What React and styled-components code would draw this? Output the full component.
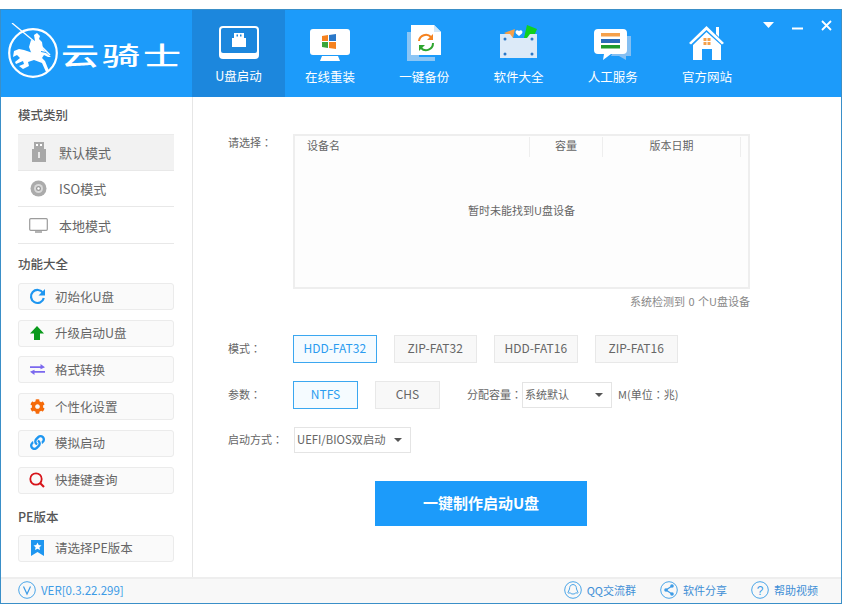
import React from "react"
import styled, { createGlobalStyle } from "styled-components"
import { FaCog, FaLink } from "react-icons/fa"

const CJK = `"Noto Sans CJK SC", "Noto Sans", sans-serif`

const navItems = [
  { label: "U盘启动", Icon: UsbIcon, top: 15, active: true },
  { label: "在线重装", Icon: MonitorIcon, top: 18 },
  { label: "一键备份", Icon: BackupIcon, top: 14 },
  { label: "软件大全", Icon: BoxIcon, top: 12 },
  { label: "人工服务", Icon: ChatIcon, top: 18 },
  { label: "官方网站", Icon: HomeIcon, top: 15 },
]

const modes = [
  { label: "默认模式", Icon: GrayUsb, active: true },
  { label: "ISO模式", Icon: GrayDisc },
  { label: "本地模式", Icon: GrayScreen },
]

const tools = [
  { label: "初始化U盘", Icon: RefreshIcon },
  { label: "升级启动U盘", Icon: UpIcon },
  { label: "格式转换", Icon: SwapIcon },
  { label: "个性化设置", Icon: () => <FaCog size={15} color="#f56a0a" /> },
  { label: "模拟启动", Icon: () => <FaLink size={15} color="#1e96f0" /> },
  { label: "快捷键查询", Icon: SearchIcon },
]

function UsbIcon() {
  return (
    <svg width="44" height="36" viewBox="0 0 44 36">
      <rect x="2" y="1" width="40" height="33" rx="4" fill="#fff" />
      <rect x="4" y="3" width="36" height="25" rx="2" fill="#1c87dd" />
      <path d="M17 8h10v5h2v9H15v-9h2z" fill="#fff" />
      <path d="M19.5 9.5h1.5v2h-1.5zM23 9.5h1.5v2H23z" fill="#1c87dd" />
    </svg>
  )
}

function MonitorIcon() {
  return (
    <svg width="42" height="36" viewBox="0 0 42 36">
      <rect x="1" y="1" width="40" height="26" rx="3" fill="#fff" />
      <path d="M11 33l2-5h16l2 5z" fill="#fff" />
      <path d="M13 8l6-1v6h-6z" fill="#f5821f" />
      <path d="M20 7l7-1v7h-7z" fill="#2a78c8" />
      <path d="M13 14h6v6l-6-1z" fill="#3aa63a" />
      <path d="M20 14h7v7l-7-1z" fill="#f5821f" />
    </svg>
  )
}

function BackupIcon() {
  return (
    <svg width="36" height="38" viewBox="0 0 36 38">
      <rect x="1" y="8" width="12" height="26" fill="#8cc6f5" />
      <rect x="1" y="33" width="28" height="4" fill="#8cc6f5" />
      <path d="M5 1h23l7 7v23H5z" fill="#fff" />
      <path d="M28 1l7 7h-7z" fill="#cfe6f8" />
      <path d="M13 17a7 7 0 0 1 12-4" fill="none" stroke="#f5821f" strokeWidth="2" />
      <path d="M27 10v6h-6z" fill="#f5821f" />
      <path d="M27 19a7 7 0 0 1-12 5" fill="none" stroke="#2ea52e" strokeWidth="2" />
      <path d="M13 27v-6h6z" fill="#2ea52e" />
    </svg>
  )
}

function BoxIcon() {
  return (
    <svg width="40" height="38" viewBox="0 0 40 38">
      <path d="M5 11l11-4-2 9z" fill="#f5a04a" />
      <path d="M28 3l10 4-3 7-3-1-2 5-5-2z" fill="#0fd01f" />
      <path d="M1 12h10l3 4h14l3-4h7v24H1z" fill="#dceaf8" />
      <path d="M20 9c-2-2-4.500 0-3 2.500l3 2.500 3-2.500c1.500-2.500-1-4.500-3-2.500z" fill="#fff" />
      <g fill="#2a78c8">
        <circle cx="6" cy="17" r="1.500" />
        <circle cx="33" cy="17" r="1.500" />
        <circle cx="6" cy="32" r="1.500" />
        <circle cx="33" cy="32" r="1.500" />
      </g>
    </svg>
  )
}

function ChatIcon() {
  return (
    <svg width="40" height="34" viewBox="0 0 40 34">
      <path d="M28 8h10v20h-5v4l-7-4h-8z" fill="#84bff2" />
      <path d="M5 1h25a4 4 0 0 1 4 4v17a4 4 0 0 1-4 4H18l-8 6 1-6H5a4 4 0 0 1-4-4V5a4 4 0 0 1 4-4z" fill="#fff" />
      <rect x="8" y="5" width="19" height="3.500" fill="#f5a04a" />
      <rect x="8" y="11" width="19" height="4" fill="#2a6cb8" />
      <rect x="8" y="17" width="19" height="3.500" fill="#1f9a2c" />
    </svg>
  )
}

function HomeIcon() {
  return (
    <svg width="38" height="36" viewBox="0 0 38 36">
      <path d="M28 2h3v10l-3-3z" fill="#fff" />
      <path d="M1 18L18.500 1 36 18l-2 1.500L18.500 5 3 19.500z" fill="#fff" />
      <path d="M5 20L18.500 7 33 20v15H24V24h-10v11H5z" fill="#fff" />
      <g fill="#f5a04a">
        <rect x="15.500" y="13" width="3" height="3" />
        <rect x="19.500" y="13" width="3" height="3" />
        <rect x="15.500" y="17" width="3" height="3" />
        <rect x="19.500" y="17" width="3" height="3" />
      </g>
    </svg>
  )
}

function LogoMark() {
  return (
    <svg width="54" height="56" viewBox="0 0 54 56">
      <circle cx="27" cy="30" r="23.800" fill="none" stroke="#fff" strokeWidth="2.200" />
      <path d="M6 0l29 24" stroke="#fff" strokeWidth="1.300" />
      <path d="M34 22l10 10" stroke="#fff" strokeWidth="1.500" />
      <path d="M28 12l3-2 3 3-1 3 3 3 1 7 3 3-5-1 0 4-9 0-3-8 2-7 4 1z" fill="#fff" />
      <path
        d="M8 28l5-2 5 1 9 3 8-1 5 1 5 4-3 0-4-2-2 3 3 3 4 10-3 1-4-9-8-3-6 2 1 4-6 3-4-3 5-2-1-3-7 3-1-2 5-4-3-3-4 2z"
        fill="#fff"
      />
    </svg>
  )
}

function GrayUsb() {
  return (
    <svg width="14" height="20" viewBox="0 0 14 20">
      <path d="M2 0h10v7h2v13H0V7h2z" fill="#a8a8a8" />
      <path d="M4 2h2v2H4zM8 2h2v2H8z" fill="#fff" />
      <path d="M7 10v6" stroke="#fff" strokeWidth="1.500" />
    </svg>
  )
}

function GrayDisc() {
  return (
    <svg width="17" height="17" viewBox="0 0 17 17">
      <circle cx="8.500" cy="8.500" r="8" fill="#ababab" />
      <circle cx="8.500" cy="8.500" r="4.500" fill="#d8d8d8" />
      <circle cx="8.500" cy="8.500" r="2.500" fill="#9a9a9a" />
      <circle cx="8.500" cy="8.500" r="1.200" fill="#fff" />
    </svg>
  )
}

function GrayScreen() {
  return (
    <svg width="19" height="15" viewBox="0 0 19 15">
      <rect x="0.700" y="0.700" width="17.600" height="11.600" rx="1" fill="#fff" stroke="#9c9c9c" strokeWidth="1.200" />
      <path d="M6 14h7" stroke="#9c9c9c" strokeWidth="1.500" />
    </svg>
  )
}

function RefreshIcon() {
  return (
    <svg width="17" height="17" viewBox="0 0 17 17">
      <path d="M14 5a6.500 6.500 0 1 0 .8 5" fill="none" stroke="#1e96f0" strokeWidth="2.200" />
      <path d="M16 1v6.500h-6.500z" fill="#1e96f0" />
    </svg>
  )
}

function UpIcon() {
  return (
    <svg width="14" height="14" viewBox="0 0 14 14">
      <path d="M7 0l7 7.500H10V14H4V7.500H0z" fill="#099a1b" />
    </svg>
  )
}

function SwapIcon() {
  return (
    <svg width="15" height="11" viewBox="0 0 15 11">
      <path d="M0 2.200h10.500V0L15 3.300l-4.500 1.900V4H0zM15 8.800H4.500V11L0 7.700l4.500-1.900V7H15z" fill="#7b68ee" />
    </svg>
  )
}

function SearchIcon() {
  return (
    <svg width="16" height="16" viewBox="0 0 16 16">
      <circle cx="7" cy="7" r="5.700" fill="none" stroke="#d7141a" strokeWidth="1.800" />
      <path d="M11 11l4 4" stroke="#d7141a" strokeWidth="2.200" />
    </svg>
  )
}

function BookmarkIcon() {
  return (
    <svg width="13" height="16" viewBox="0 0 13 16">
      <path d="M0 0h13v16l-6.500-4L0 16z" fill="#1e96f0" />
      <path d="M6.500 2.500l1.200 2.600 2.800.3-2.100 1.900.6 2.800-2.500-1.400L4 10.100l.6-2.800-2.100-1.900 2.800-.3z" fill="#fff" />
    </svg>
  )
}

function CircleBadge({ children }) {
  return (
    <svg width="18" height="18" viewBox="0 0 18 18">
      <circle cx="9" cy="9" r="8.300" fill="none" stroke="#4aa5e8" strokeWidth="1" />
      {children}
    </svg>
  )
}

const Glyph = styled.text`
  font: 12px "Liberation Sans", sans-serif;
  fill: #3d9be6;
  text-anchor: middle;
`

const App = () => (
  <>
    <GlobalStyle />
    <Win>
      <Header>
        <Logo>
          <LogoMark />
          <LogoText>云骑士</LogoText>
        </Logo>
        <Nav>
          {navItems.map(({ label, Icon, top, active }) => (
            <NavItem key={label} $active={active}>
              <NavIcon $top={top}>
                <Icon />
              </NavIcon>
              <NavLabel $active={active}>{label}</NavLabel>
            </NavItem>
          ))}
        </Nav>
        <WinControls>
          <svg width="11" height="6" viewBox="0 0 11 6">
            <path d="M0 0h11L5.500 6z" fill="#fff" />
          </svg>
          <svg width="11" height="11" viewBox="0 0 11 11">
            <path d="M0 8.500h11" stroke="#fff" strokeWidth="2" />
          </svg>
          <svg width="11" height="11" viewBox="0 0 11 11">
            <path d="M1 1l9 9M10 1l-9 9" stroke="#fff" strokeWidth="1.800" />
          </svg>
        </WinControls>
      </Header>

      <Body>
        <Sidebar>
          <SideTitle>模式类别</SideTitle>
          <ModeList>
            {modes.map(({ label, Icon, active }) => (
              <ModeRow key={label} $active={active}>
                <ModeIcon>
                  <Icon />
                </ModeIcon>
                {label}
              </ModeRow>
            ))}
          </ModeList>
          <SideTitle $above={10}>功能大全</SideTitle>
          <ToolList>
            {tools.map(({ label, Icon }) => (
              <ToolButton key={label}>
                <ToolIcon>
                  <Icon />
                </ToolIcon>
                {label}
              </ToolButton>
            ))}
          </ToolList>
          <SideTitle $above={13} $below={8}>
            PE版本
          </SideTitle>
          <ToolButton>
            <ToolIcon>
              <BookmarkIcon />
            </ToolIcon>
            请选择PE版本
          </ToolButton>
        </Sidebar>

        <Main>
          <TableRow>
            <FieldLabel>
              请选择<Colon>：</Colon>
            </FieldLabel>
            <DeviceTable>
              <TableHead>
                <HeadCell $left>设备名</HeadCell>
                <HeadCell>容量</HeadCell>
                <HeadCell>版本日期</HeadCell>
              </TableHead>
              <Empty>暂时未能找到U盘设备</Empty>
            </DeviceTable>
          </TableRow>
          <Hint>系统检测到 0 个U盘设备</Hint>

          <OptionRow>
            <FieldLabel>
              模式<Colon>：</Colon>
            </FieldLabel>
            <Choice $active>HDD-FAT32</Choice>
            <Choice>ZIP-FAT32</Choice>
            <Choice>HDD-FAT16</Choice>
            <Choice>ZIP-FAT16</Choice>
          </OptionRow>
          <OptionRow>
            <FieldLabel>
              参数<Colon>：</Colon>
            </FieldLabel>
            <Choice $active $small>
              NTFS
            </Choice>
            <Choice $small>CHS</Choice>
            <SizeLabel>
              分配容量<Colon>：</Colon>
            </SizeLabel>
            <Select $width={90}>
              系统默认
              <Caret />
            </Select>
            <Unit>
              M(单位<Colon>：</Colon>兆)
            </Unit>
          </OptionRow>
          <BootRow>
            <FieldLabel>
              启动方式<Colon>：</Colon>
            </FieldLabel>
            <Select $width={117} $boot>
              UEFI/BIOS双启动
              <Caret />
            </Select>
          </BootRow>
          <MakeButton>一键制作启动U盘</MakeButton>
        </Main>
      </Body>

      <Footer>
        <Version>
          <CircleBadge>
            <path d="M5.500 5.500L9 13l3.500-7.500" fill="none" stroke="#3d9be6" strokeWidth="1.200" />
          </CircleBadge>
          VER[0.3.22.299]
        </Version>
        <FooterLinks>
          <FooterLink>
            <CircleBadge>
              <path d="M9 3.500c-3 0-3.500 3-3.500 4.500L4 11.500c.5 1.500 1.500.5 2 0 .5 2 5.500 2 6 0 .5.500 1.500 1.500 2 0L12.500 8c0-1.500-.5-4.500-3.500-4.500z" fill="none" stroke="#4aa5e8" strokeWidth="1" />
            </CircleBadge>
            QQ交流群
          </FooterLink>
          <FooterLink>
            <CircleBadge>
              <path d="M12 5L6 9l6 4" fill="none" stroke="#3d9be6" strokeWidth="1.200" />
              <circle cx="12" cy="5" r="1.800" fill="#3d9be6" />
              <circle cx="6" cy="9" r="1.800" fill="#3d9be6" />
              <circle cx="12" cy="13" r="1.800" fill="#3d9be6" />
            </CircleBadge>
            软件分享
          </FooterLink>
          <FooterLink>
            <CircleBadge>
              <Glyph x="9" y="13.500">?</Glyph>
            </CircleBadge>
            帮助视频
          </FooterLink>
        </FooterLinks>
      </Footer>
    </Win>
  </>
)

export default App

const GlobalStyle = createGlobalStyle`
  * {
    box-sizing: border-box;
  }
  body {
    margin: 0;
    background: #fff;
    font-family: ${CJK};
  }
`
const Win = styled.div`
  width: 842px;
  height: 595px;
  margin-top: 9px;
  display: flex;
  flex-direction: column;
  border: 1px solid #3a8fc8;
  background: #fff;
`
const Header = styled.header`
  position: relative;
  flex: 0 0 87px;
  display: flex;
  background: #1c9bfa;
`
const Logo = styled.div`
  width: 191px;
  display: flex;
  align-items: flex-start;
  padding: 13px 0 0 5px;
`
const LogoText = styled.div`
  margin: 12px 0 0 1px;
  color: #fff;
  font-size: 38px;
  font-weight: 500;
  line-height: 38px;
  letter-spacing: 3px;
  white-space: nowrap;
  transform: scaleY(0.66);
`
const Nav = styled.nav`
  display: flex;
`
const NavItem = styled.div`
  width: ${(p) => (p.$active ? "93px" : "94.25px")};
  padding-right: ${(p) => (p.$active ? "0" : "4px")};
  display: flex;
  flex-direction: column;
  align-items: center;
  background: ${(p) => (p.$active ? "#1c87dd" : "transparent")};
`
const NavIcon = styled.div`
  height: 56px;
  padding-top: ${(p) => p.$top}px;
`
const NavLabel = styled.div`
  color: #fff;
  font-size: 12.5px;
  line-height: 18px;
  margin-top: ${(p) => (p.$active ? "1px" : "2px")};
`
const WinControls = styled.div`
  position: absolute;
  top: 10px;
  right: 9px;
  display: flex;
  align-items: flex-start;
  gap: 18px;
  svg:first-child {
    margin-top: 2px;
  }
`
const Body = styled.div`
  flex: 1;
  display: flex;
  min-height: 0;
`
const Sidebar = styled.aside`
  width: 192px;
  padding: 8px 18px 0 17px;
  border-right: 1px solid #e6e6e6;
`
const SideTitle = styled.div`
  height: 20px;
  margin: ${(p) => p.$above || 0}px 0 ${(p) => p.$below || 9}px;
  color: #555;
  font-size: 12.5px;
  font-weight: 500;
  line-height: 20px;
`
const ModeList = styled.div`
  display: flex;
  flex-direction: column;
`
const ModeRow = styled.div`
  height: 36.7px;
  display: flex;
  align-items: center;
  color: #666;
  font-size: 13px;
  background: ${(p) => (p.$active ? "#f2f2f2" : "transparent")};
  border-bottom: 1px solid #e8e8e8;
  border-top: ${(p) => (p.$active ? "1px solid #ececec" : "none")};
`
const ModeIcon = styled.span`
  width: 41px;
  display: flex;
  justify-content: center;
`
const ToolList = styled.div`
  display: flex;
  flex-direction: column;
  gap: 9.7px;
`
const ToolButton = styled.div`
  height: 27px;
  padding-bottom: 1px;
  display: flex;
  align-items: center;
  color: #666;
  font-size: 12.5px;
  background: #fafafa;
  border: 1px solid #ebebeb;
  border-radius: 3px;
`
const ToolIcon = styled.span`
  width: 36px;
  display: flex;
  justify-content: center;
`
const Main = styled.main`
  flex: 1;
  padding: 37px 0 0 35px;
`
const Colon = styled.span`
  font-family: "Noto Sans CJK TC", sans-serif;
`
const FieldLabel = styled.div`
  width: 65px;
  flex: none;
  padding-bottom: 2px;
  color: #666;
  font-size: 11px;
  white-space: nowrap;
`
const TableRow = styled.div`
  display: flex;
  align-items: flex-start;
`
const DeviceTable = styled.div`
  width: 457px;
  height: 155px;
  display: flex;
  flex-direction: column;
  border: 2px solid #eee;
  background: #fdfdfd;
`
const TableHead = styled.div`
  display: grid;
  grid-template-columns: 235px 73px 138px;
  padding-top: 1px;
`
const HeadCell = styled.div`
  height: 20px;
  padding-left: ${(p) => (p.$left ? "12px" : "0")};
  text-align: ${(p) => (p.$left ? "left" : "center")};
  color: #666;
  font-size: 11px;
  line-height: 16px;
  border-right: 1px solid #eee;
`
const Empty = styled.div`
  flex: 1;
  display: flex;
  align-items: center;
  justify-content: center;
  padding-bottom: 24px;
  color: #666;
  font-size: 11px;
`
const Hint = styled.div`
  width: 522px;
  height: 18px;
  margin: 3px 0 25px;
  text-align: right;
  color: #888;
  font-size: 11px;
  line-height: 18px;
  word-spacing: 1px;
`
const OptionRow = styled.div`
  height: 28px;
  margin-bottom: 18px;
  display: flex;
  align-items: center;
`
const BootRow = styled(OptionRow)`
  height: 26px;
  margin-bottom: 28px;
`
const Choice = styled.div`
  width: ${(p) => (p.$small ? "65px" : "83.5px")};
  height: 28px;
  margin-right: 17px;
  padding-bottom: 3px;
  display: flex;
  align-items: center;
  justify-content: center;
  color: ${(p) => (p.$active ? "#2b9cf0" : "#666")};
  font-size: 12px;
  background: ${(p) => (p.$active ? "#f5fbff" : "#f8f8f8")};
  border: 1px solid ${(p) => (p.$active ? "#3ba7f0" : "#e8e8e8")};
`
const SizeLabel = styled.div`
  width: 55px;
  margin-left: 10px;
  padding-bottom: 3px;
  color: #666;
  font-size: 11px;
  white-space: nowrap;
`
const Select = styled.div`
  position: relative;
  width: ${(p) => p.$width}px;
  height: 26px;
  margin-left: ${(p) => (p.$boot ? "1px" : "0")};
  padding: 0 0 3px 2px;
  display: flex;
  align-items: center;
  color: #666;
  font-size: ${(p) => (p.$boot ? "11.3px" : "11px")};
  white-space: nowrap;
  background: #fff;
  border: 1px solid #e4e4e4;
`
const Caret = styled.span`
  position: absolute;
  right: 8px;
  top: 10px;
  border-left: 4px solid transparent;
  border-right: 4px solid transparent;
  border-top: 4px solid #555;
`
const Unit = styled.div`
  margin-left: 6px;
  padding-bottom: 3px;
  color: #666;
  font-size: 11px;
`
const MakeButton = styled.div`
  width: 212px;
  height: 45px;
  margin-left: 147px;
  padding-bottom: 2px;
  display: flex;
  align-items: center;
  justify-content: center;
  color: #fff;
  font-size: 15px;
  font-weight: 700;
  background: #1c9bfa;
`
const Footer = styled.footer`
  flex: 0 0 26px;
  display: flex;
  align-items: center;
  justify-content: space-between;
  padding: 0 23px 2px 17px;
  background: #f8f8f8;
  border-top: 2px solid #eee;
`
const Version = styled.div`
  display: flex;
  align-items: center;
  gap: 5px;
  color: #3d9be6;
  font-size: 11.5px;
`
const FooterLinks = styled.div`
  display: flex;
  gap: 24px;
`
const FooterLink = styled.div`
  display: flex;
  align-items: center;
  gap: 5px;
  color: #3f8fd6;
  font-size: 11px;
`
